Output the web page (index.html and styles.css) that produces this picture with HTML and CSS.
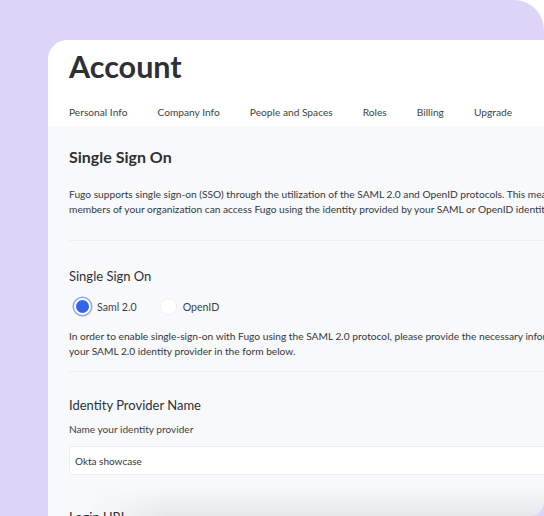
FILE: index.html
```html
<!DOCTYPE html>
<html lang="en">

<head>
    <meta charset="UTF-8">
    <meta name="viewport" content="width=device-width, initial-scale=1.0">
    <title>Account</title>
    <link rel="stylesheet" href="styles.css">
</head>

<body>
    <div class="stage">
        <div class="card">
            <header class="card-header">
                <h1>Account</h1>
                <nav class="tabs">
                    <span>Personal Info</span>
                    <span>Company Info</span>
                    <span>People and Spaces</span>
                    <span>Roles</span>
                    <span>Billing</span>
                    <span>Upgrade</span>
                </nav>
            </header>
            <main class="content">
                <h2>Single Sign On</h2>
                <p class="intro">Fugo supports single sign-on (SSO) through the utilization of the SAML 2.0 and OpenID protocols. This means that<br>
                    members of your organization can access Fugo using the identity provided by your SAML or OpenID identity provider.</p>
                <hr>
                <h3>Single Sign On</h3>
                <div class="radios">
                    <label class="radio checked"><span class="dot"></span>Saml 2.0</label>
                    <label class="radio"><span class="dot"></span>OpenID</label>
                </div>
                <p class="note">In order to enable single-sign-on with Fugo using the SAML 2.0 protocol, please provide the necessary information about<br>
                    your SAML 2.0 identity provider in the form below.</p>
                <hr>
                <h3 class="field-title">Identity Provider Name</h3>
                <div class="hint">Name your identity provider</div>
                <div class="input">Okta showcase</div>
                <h3 class="field-title next">Login URL</h3>
            </main>
        </div>
    </div>
</body>

</html>
```

FILE: styles.css
```css
body {
    margin: 0;
    padding: 0;
    background: #ffffff;
    font-family: 'Lato', 'Noto Sans', sans-serif;
    overflow: hidden;
}

.stage {
    width: 544px;
    height: 516px;
    box-sizing: border-box;
    padding: 40px 0 0 48px;
    background-color: #ddd5f8;
    border-top-right-radius: 30px;
}

.card {
    position: relative;
    height: 476px;
    background-color: #f8f9fb;
    border-top-left-radius: 20px;
    border-bottom-right-radius: 14px;
    overflow: hidden;
}

.card::after {
    content: "";
    position: absolute;
    left: 40px;
    right: 0;
    bottom: 0;
    height: 30px;
    background: linear-gradient(to bottom, rgba(30, 30, 50, 0), rgba(30, 30, 50, 0.08));
    -webkit-mask-image: linear-gradient(to right, transparent, #000 80px);
    mask-image: linear-gradient(to right, transparent, #000 80px);
}

.card-header {
    background-color: #ffffff;
    padding: 8px 0 0 21px;
}

h1 {
    margin: 0;
    font-size: 30.5px;
    font-weight: 700;
    line-height: 36px;
    color: #2e3036;
}

.tabs {
    display: flex;
    gap: 30px;
    height: 28px;
    align-items: center;
    margin-top: 14px;
    font-size: 10.2px;
    color: #3d3f46;
    white-space: nowrap;
}

.content {
    padding: 20px 0 0 21px;
    color: #34363c;
}

h2 {
    margin: 0;
    font-size: 16px;
    font-weight: 700;
    line-height: 22px;
    color: #2e3036;
}

p {
    margin: 0;
    font-size: 10.2px;
    line-height: 15px;
    white-space: nowrap;
}

.intro {
    margin-top: 19px;
}

hr {
    border: none;
    border-top: 1px solid #eceef3;
    margin: 0;
}

.intro + hr {
    margin-top: 23px;
}

h3 {
    margin: 0;
    font-size: 13px;
    font-weight: 400;
    line-height: 18px;
    color: #2e3036;
}

hr + h3 {
    margin-top: 26px;
}

.radios {
    display: flex;
    gap: 23px;
    margin-top: 13px;
    margin-left: 5px;
    font-size: 10.6px;
    color: #3d3f46;
}

.radio {
    display: flex;
    align-items: center;
    gap: 6px;
}

.dot {
    width: 17px;
    height: 17px;
    box-sizing: border-box;
    border-radius: 50%;
    background: #ffffff;
    border: 1px solid #f0f1f4;
}

.radio.checked .dot {
    background: #2f66ec;
    border: 2.5px solid #ffffff;
    box-shadow: 0 0 0 1.5px #8aa8f0;
}

.note {
    margin-top: 14px;
}

.note + hr {
    margin-top: 12px;
}

hr + .field-title {
    margin-top: 24px;
}

.hint {
    margin-top: 9px;
    font-size: 10.1px;
    line-height: 12px;
    color: #3d3f46;
}

.input {
    margin-top: 11px;
    height: 29px;
    box-sizing: border-box;
    border: 1px solid #eceef2;
    border-right: none;
    border-radius: 3px 0 0 3px;
    background: #ffffff;
    padding: 0 5px;
    display: flex;
    align-items: center;
    font-size: 10px;
    color: #34363c;
}

.field-title.next {
    margin-top: 33px;
}
```
